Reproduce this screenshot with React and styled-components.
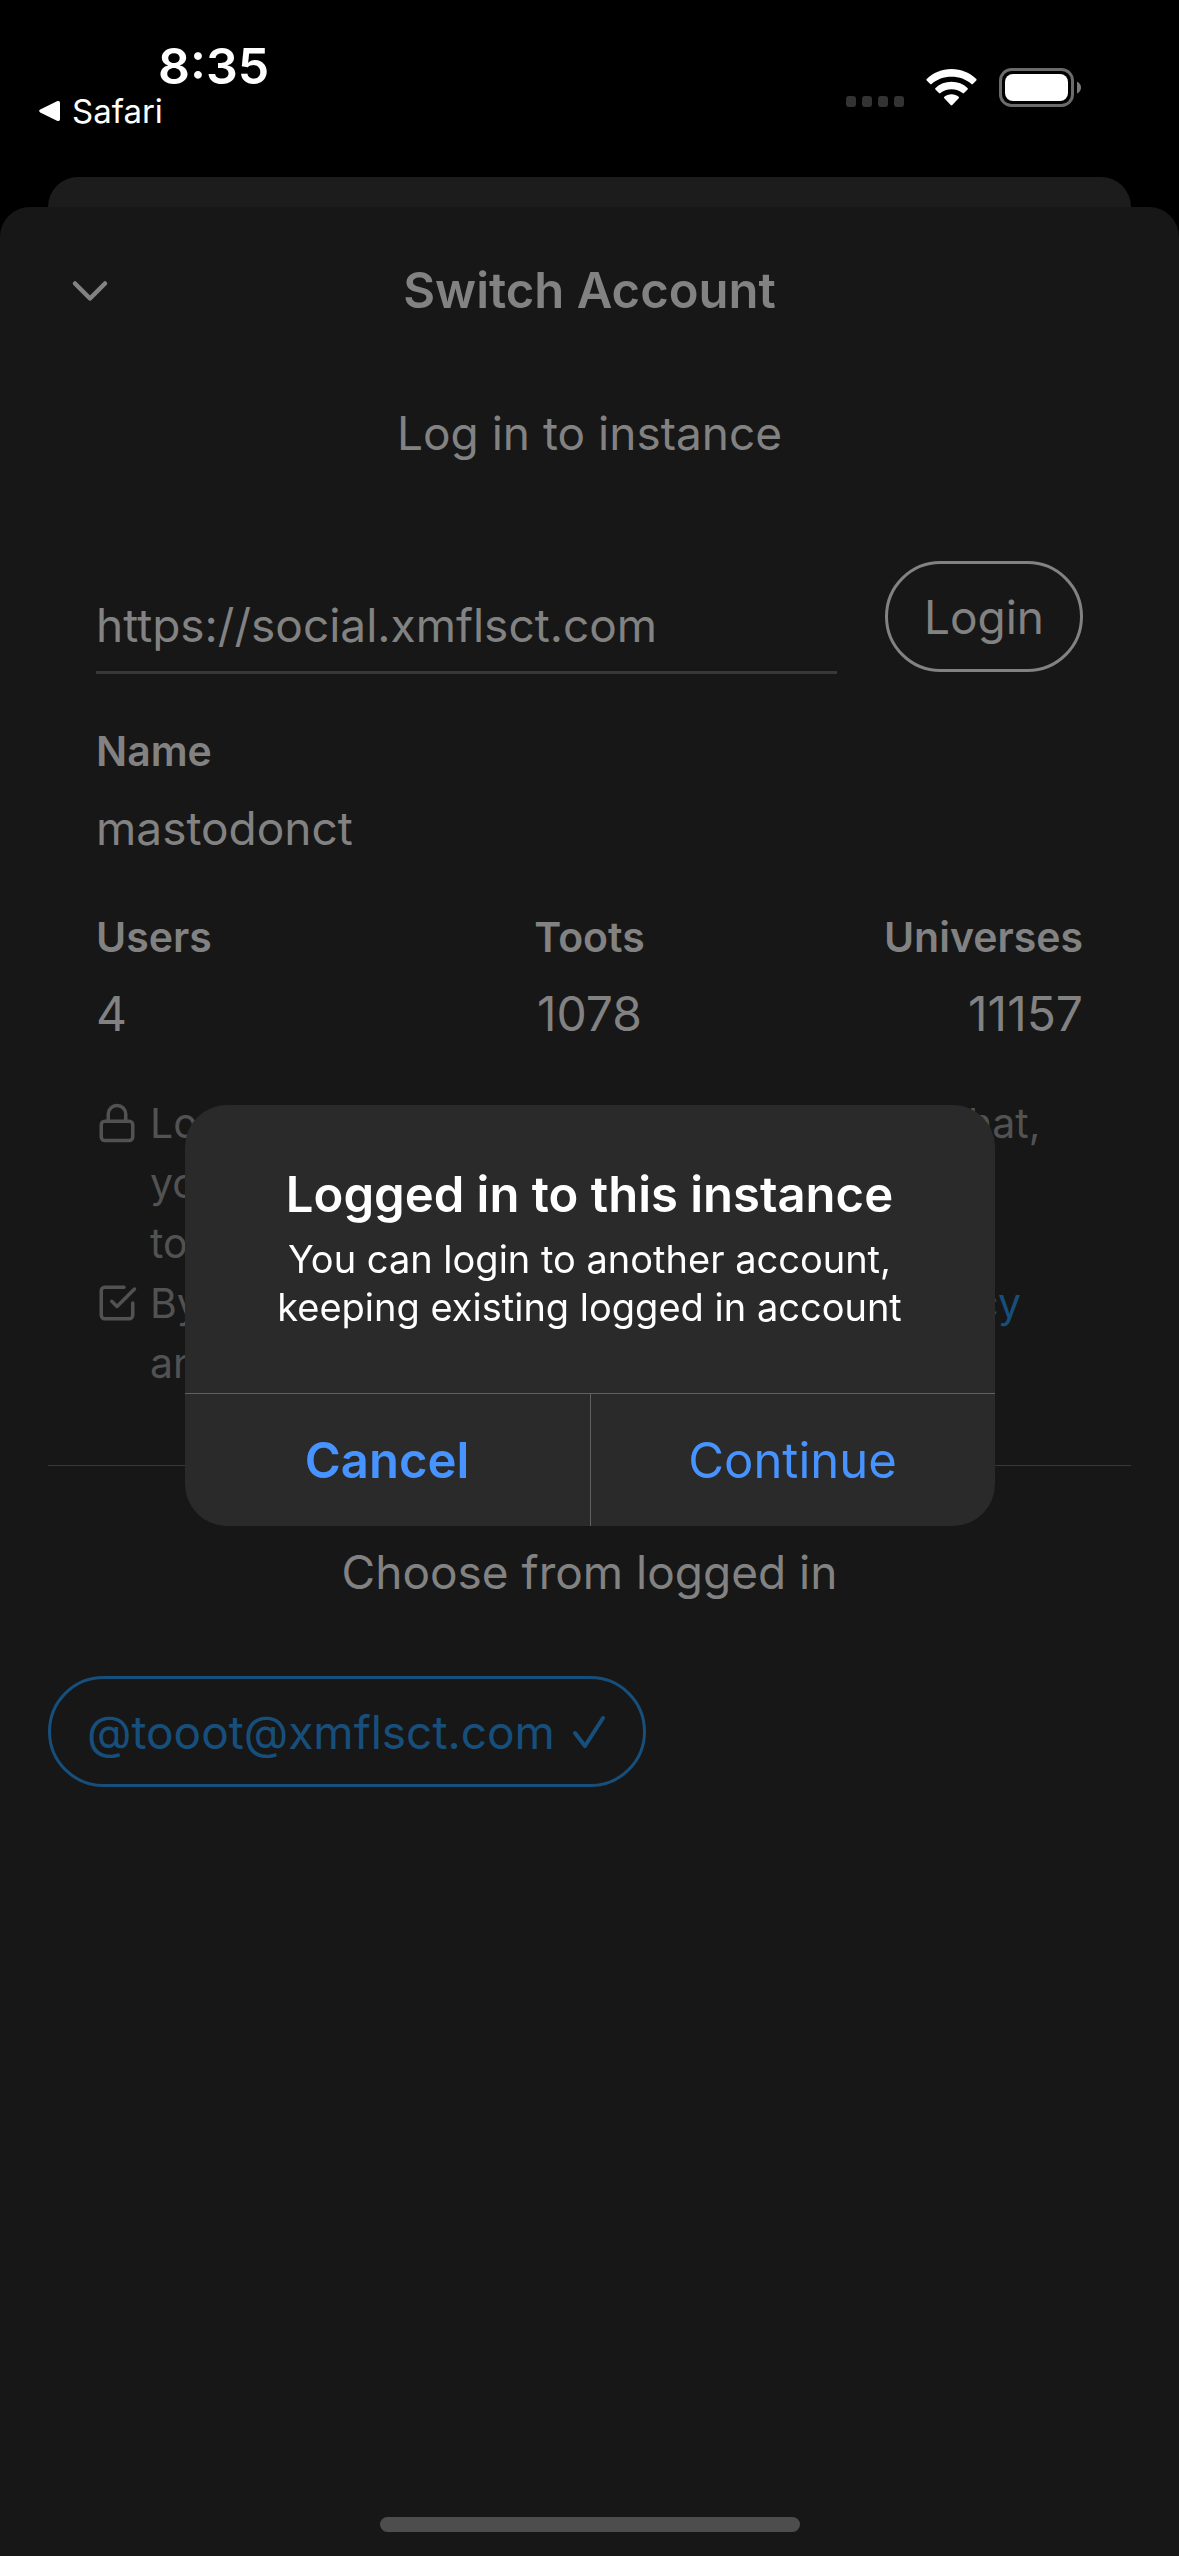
import React from "react";
import styled, { createGlobalStyle } from "styled-components";

const GlobalStyle = createGlobalStyle`
  *, *::before, *::after { box-sizing: border-box; }
  body {
    margin: 0;
    background: #000;
    font-family: Inter, "Liberation Sans", sans-serif;
    color: #828282;
  }
  h1, h2, p, dl, dt, dd { margin: 0; font-weight: 400; }
  button, input { font: inherit; color: inherit; background: none; border: 0; padding: 0; margin: 0; border-radius: 0; }
  button { cursor: pointer; }
`;

const Screen = styled.div`
  min-height: 100vh;
  display: flex;
  flex-direction: column;
`;

const StatusBar = styled.header`
  display: flex;
  justify-content: space-between;
  align-items: flex-start;
  height: 177px;
  padding: 0 97px 0 36px;
  color: #fff;
`;

const StatusLeft = styled.div`
  display: flex;
  flex-direction: column;
  padding-top: 36px;
`;

const Clock = styled.time`
  padding-left: 122px;
  font-size: 50px;
  line-height: 60px;
  font-weight: 600;
`;

const BackLink = styled.a`
  display: flex;
  align-items: center;
  gap: 9px;
  font-size: 33px;
  line-height: 30px;
  color: #fff;
  text-decoration: none;
`;

const StatusIcons = styled.div`
  display: flex;
  align-items: center;
  gap: 22px;
  padding-top: 68px;
`;

const SheetBehind = styled.div`
  height: 66px;
  margin: 0 48px -36px;
  border-radius: 30px 30px 0 0;
  background: #1c1c1c;
`;

const Sheet = styled.main`
  flex: 1;
  display: flex;
  flex-direction: column;
  position: relative;
  border-radius: 30px 30px 0 0;
  background: #171717;
`;

const NavBar = styled.div`
  display: grid;
  grid-template-columns: 132px 1fr 132px;
  align-items: center;
  height: 168px;
  padding: 0 24px;
`;

const CloseButton = styled.button`
  display: flex;
  justify-content: center;
  align-items: center;
  height: 72px;
`;

const NavTitle = styled.h1`
  text-align: center;
  font-size: 49px;
  line-height: 60px;
  font-weight: 600;
`;

const SectionTitle = styled.h2`
  text-align: center;
  font-size: 46px;
  line-height: 60px;
`;

const LoginSection = styled.section`
  padding: 28px 96px 72px;
`;

const InstanceForm = styled.form`
  display: flex;
  gap: 48px;
  height: 113px;
  margin: 98px 0 50px;
`;

const InstanceInput = styled.input`
  flex: 1;
  min-width: 0;
  align-self: flex-end;
  height: 96px;
  border-bottom: 3px solid #383838;
  font-size: 46px;
  outline: none;
`;

const Pill = styled.button`
  display: inline-flex;
  align-items: center;
  gap: 16px;
  height: 111px;
  padding: 0 36px;
  border: 3px solid currentColor;
  border-radius: 56px;
  font-size: 46px;
  color: ${(p) => (p.$active ? "#174f7c" : "#828282")};
`;

const Facts = styled.dl`
  display: grid;
  grid-template-columns: repeat(3, 1fr);
  row-gap: 52px;
`;

const Fact = styled.div`
  display: flex;
  flex-direction: column;
  gap: 20px;
  grid-column: ${(p) => (p.$wide ? "1 / -1" : "auto")};
  text-align: ${(p) => p.$align || "left"};

  dt { font-size: 41px; line-height: 54px; font-weight: 600; }
  dd { font-size: ${(p) => (p.$wide ? "46px" : "48px")}; line-height: 60px; }
`;

const Notes = styled.div`
  margin-top: 49px;
  color: #525252;
`;

const Note = styled.div`
  display: flex;
  gap: 12px;
  font-size: 41px;
  line-height: 60px;

  svg { flex: none; margin-top: 9px; }
  a { color: #174f7c; text-decoration: none; }
`;

const AccountsSection = styled.section`
  margin: 0 48px;
  padding-top: 76px;
  border-top: 1px solid #383838;
`;

const Accounts = styled.div`
  display: flex;
  flex-wrap: wrap;
  gap: 24px;
  margin-top: 74px;
`;

const HomeIndicator = styled.div`
  width: 420px;
  height: 15px;
  margin: auto auto 24px;
  border-radius: 8px;
  background: #4d4d4d;
`;

const Overlay = styled.div`
  position: fixed;
  inset: 0;
  display: flex;
  align-items: center;
  justify-content: center;
  padding-top: 75px;
`;

const Alert = styled.div`
  width: 810px;
  max-width: 90%;
  overflow: hidden;
  border-radius: 42px;
  background: #2a2a2a;
  text-align: center;
`;

const AlertBody = styled.div`
  padding: 60px 48px 62px;
  color: #fff;
`;

const AlertTitle = styled.h2`
  font-size: 49px;
  line-height: 60px;
  font-weight: 600;
`;

const AlertText = styled.p`
  margin-top: 10px;
  font-size: 38px;
  line-height: 48px;
`;

const AlertActions = styled.div`
  display: grid;
  grid-template-columns: 1fr 1fr;
  border-top: 1px solid #606261;
`;

const AlertButton = styled.button`
  height: 132px;
  font-size: 49px;
  font-weight: ${(p) => (p.$strong ? 600 : 400)};
  color: #4793ff;

  & + & { border-left: 1px solid #606261; }
`;

const strokeProps = {
  fill: "none",
  stroke: "currentColor",
  strokeWidth: 2,
  strokeLinecap: "round",
  strokeLinejoin: "round",
  "aria-hidden": true,
};

const BackTriangle = () => (
  <svg width="27" height="24" viewBox="0 0 27 24" fill="#fff" aria-hidden="true">
    <path d="M4.2 10.6 L21.5 2.1 Q24 1.2 24 4 V20 Q24 22.8 21.5 21.9 L4.2 13.4 Q2 12 4.2 10.6 Z" />
  </svg>
);

const CellDots = () => (
  <svg width="58" height="39" viewBox="0 0 58 39" fill="#333" aria-hidden="true">
    {[0, 16, 32, 48].map((x) => (
      <rect key={x} x={x} y="28" width="10" height="11" rx="3" />
    ))}
  </svg>
);

const Wifi = () => (
  <svg width="51" height="39" viewBox="0 0 51 39" fill="#fff" aria-hidden="true">
    <path d="M25.5 1 C35.2 1 43.9 4.8 50.3 11 Q51 11.7 50.3 12.4 L46.8 16 Q46.1 16.6 45.4 16 C40.2 11.2 33.2 8.7 25.5 8.7 C17.8 8.7 10.8 11.2 5.6 16 Q4.9 16.6 4.2 16 L0.7 12.4 Q0 11.7 0.7 11 C7.1 4.8 15.8 1 25.5 1 Z" />
    <path d="M25.5 13.8 C31.7 13.8 37.3 16 41.5 19.9 Q42.3 20.6 41.6 21.4 L38 25.1 Q37.3 25.7 36.6 25.1 C33.6 22.7 29.8 21.3 25.5 21.3 C21.2 21.3 17.4 22.7 14.4 25.1 Q13.7 25.7 13 25.1 L9.4 21.4 Q8.7 20.6 9.5 19.9 C13.7 16 19.3 13.8 25.5 13.8 Z" />
    <path d="M25.5 26.3 C28.3 26.3 30.8 27.2 32.7 28.8 Q33.4 29.5 32.7 30.2 L26.3 37 Q25.5 37.8 24.7 37 L18.3 30.2 Q17.6 29.5 18.3 28.8 C20.2 27.2 22.7 26.3 25.5 26.3 Z" />
  </svg>
);

const Battery = () => (
  <svg width="83" height="39" viewBox="0 0 83 39" aria-hidden="true">
    <rect x="1.5" y="1.5" width="72" height="36" rx="11" fill="none" stroke="#6b6b6b" strokeWidth="3" />
    <rect x="6" y="6" width="63" height="27" rx="8" fill="#fff" />
    <path d="M78 13.5 Q82 15.5 82 19.5 Q82 23.5 78 25.5 Z" fill="#7a7a7a" />
  </svg>
);

const ChevronDown = () => (
  <svg width="60" height="60" viewBox="0 0 24 24" {...strokeProps} strokeWidth="1.8">
    <polyline points="6 9 12 15 18 9" />
  </svg>
);

const Lock = () => (
  <svg width="42" height="42" viewBox="0 0 24 24" {...strokeProps}>
    <rect x="3" y="11" width="18" height="11" rx="2" />
    <path d="M7 11V7a5 5 0 0 1 10 0v4" />
  </svg>
);

const CheckSquare = () => (
  <svg width="42" height="42" viewBox="0 0 24 24" {...strokeProps}>
    <polyline points="9 11 12 14 22 4" />
    <path d="M21 12v7a2 2 0 0 1-2 2H5a2 2 0 0 1-2-2V5a2 2 0 0 1 2-2h11" />
  </svg>
);

const Tick = () => (
  <svg width="36" height="36" viewBox="0 0 36 36" {...strokeProps} strokeWidth="4">
    <polyline points="4 19 14 32 32 4" />
  </svg>
);

const stats = [
  { label: "Users", value: "4", align: "left" },
  { label: "Toots", value: "1078", align: "center" },
  { label: "Universes", value: "11157", align: "right" },
];

export default function App() {
  return (
    <Screen>
      <GlobalStyle />
      <StatusBar>
        <StatusLeft>
          <Clock>8:35</Clock>
          <BackLink href="#safari">
            <BackTriangle />
            Safari
          </BackLink>
        </StatusLeft>
        <StatusIcons>
          <CellDots />
          <Wifi />
          <Battery />
        </StatusIcons>
      </StatusBar>
      <SheetBehind />
      <Sheet>
        <NavBar>
          <CloseButton type="button" aria-label="Close">
            <ChevronDown />
          </CloseButton>
          <NavTitle>Switch Account</NavTitle>
        </NavBar>

        <LoginSection>
          <SectionTitle>Log in to instance</SectionTitle>
          <InstanceForm onSubmit={(e) => e.preventDefault()}>
            <InstanceInput type="text" aria-label="Instance address" defaultValue="https://social.xmflsct.com" />
            <Pill type="submit">Login</Pill>
          </InstanceForm>
          <Facts>
            <Fact $wide>
              <dt>Name</dt>
              <dd>mastodonct</dd>
            </Fact>
            {stats.map((s) => (
              <Fact key={s.label} $align={s.align}>
                <dt>{s.label}</dt>
                <dd>{s.value}</dd>
              </Fact>
            ))}
          </Facts>
          <Notes>
            <Note>
              <Lock />
              <p>
                Logging in process uses system browser that, your account information won't be visible
                to&nbsp;tooot application.
              </p>
            </Note>
            <Note>
              <CheckSquare />
              <p>
                By logging in, you agree to the <a href="#privacy">privacy policy</a> and{" "}
                <a href="#terms">terms of service</a>.
              </p>
            </Note>
          </Notes>
        </LoginSection>

        <AccountsSection>
          <SectionTitle>Choose from logged in</SectionTitle>
          <Accounts>
            <Pill type="button" $active>
              @tooot@xmflsct.com
              <Tick />
            </Pill>
          </Accounts>
        </AccountsSection>

        <HomeIndicator />
      </Sheet>

      <Overlay>
        <Alert role="alertdialog" aria-modal="true" aria-labelledby="alert-title" aria-describedby="alert-text">
          <AlertBody>
            <AlertTitle id="alert-title">Logged in to this instance</AlertTitle>
            <AlertText id="alert-text">You can login to another account, keeping existing logged in account</AlertText>
          </AlertBody>
          <AlertActions>
            <AlertButton type="button" $strong>
              Cancel
            </AlertButton>
            <AlertButton type="button">Continue</AlertButton>
          </AlertActions>
        </Alert>
      </Overlay>
    </Screen>
  );
}
